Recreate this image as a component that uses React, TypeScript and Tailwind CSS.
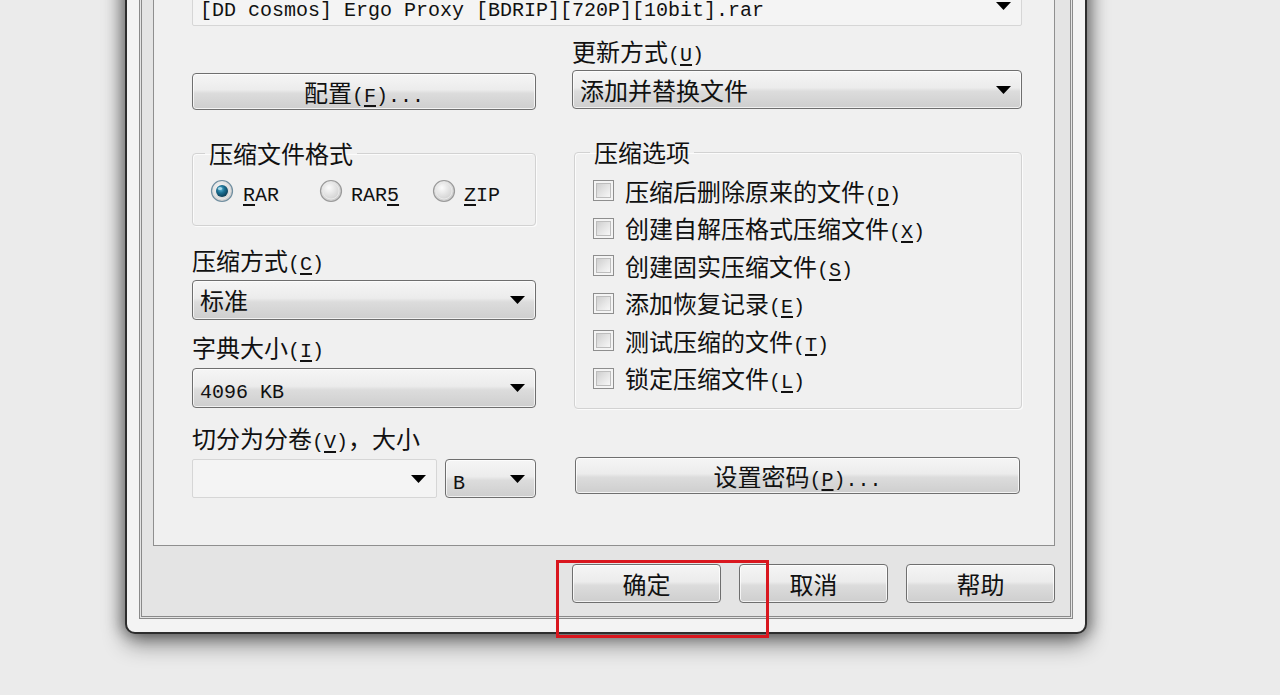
import React from 'react';

const grad =
  'bg-[linear-gradient(to_bottom,#f5f5f5_0%,#ececec_45%,#dcdcdc_55%,#cecece_100%)]';

const Mono: React.FC<{ children: React.ReactNode }> = ({ children }) => (
  <span className="font-['Liberation_Mono',monospace] text-[20px] leading-[16px]">{children}</span>
);

// (X) mnemonic with the underlined access key
const Key: React.FC<{ k: string }> = ({ k }) => (
  <Mono>
    (<span className="underline underline-offset-[3px]">{k}</span>)
  </Mono>
);

const Arrow: React.FC = () => (
  <svg width="15" height="8" viewBox="0 0 15 8" className="shrink-0">
    <polygon points="0,0 15,0 7.5,8" fill="#000" />
  </svg>
);

const Combo: React.FC<{ children?: React.ReactNode; className?: string }> = ({ children, className = '' }) => (
  <div
    className={`flex items-center justify-between rounded-[4px] border border-[#6e6e6e] pl-[7px] pr-[10px] shadow-[inset_0_0_0_1px_rgba(255,255,255,0.7)] ${grad} ${className}`}
  >
    <span className="leading-[26px]">{children}</span>
    <Arrow />
  </div>
);

const EditCombo: React.FC<{ children?: React.ReactNode; className?: string }> = ({ children, className = '' }) => (
  <div
    className={`flex items-center justify-between rounded-[2px] border border-[#d6d6d6] bg-[#f4f4f4] pl-[7px] pr-[10px] ${className}`}
  >
    <span className="leading-[26px]">{children}</span>
    <Arrow />
  </div>
);

const Button: React.FC<{ children: React.ReactNode; className?: string }> = ({ children, className = '' }) => (
  <div
    className={`flex items-center justify-center rounded-[4px] border border-[#6f6f6f] leading-[26px] shadow-[inset_0_0_0_1px_rgba(255,255,255,0.75)] ${grad} ${className}`}
  >
    <span className="leading-[26px]">{children}</span>
  </div>
);

const Radio: React.FC<{ checked?: boolean }> = ({ checked }) => (
  <svg width="24" height="24" viewBox="0 0 24 24" className="shrink-0">
    <defs>
      <radialGradient id="rOff" cx="40%" cy="35%" r="70%">
        <stop offset="0%" stopColor="#fbfbfb" />
        <stop offset="100%" stopColor="#c9c9c9" />
      </radialGradient>
      <radialGradient id="rOn" cx="40%" cy="35%" r="70%">
        <stop offset="0%" stopColor="#5fb7d6" />
        <stop offset="45%" stopColor="#1b6f92" />
        <stop offset="100%" stopColor="#0a3850" />
      </radialGradient>
    </defs>
    <circle cx="12" cy="12" r="10.5" fill="url(#rOff)" stroke={checked ? '#6f8ea0' : '#9a9a9a'} strokeWidth="1.2" />
    <circle cx="12" cy="12" r="8" fill="none" stroke="#e9e9e9" strokeWidth="1" />
    {checked && <circle cx="12" cy="12" r="6" fill="url(#rOn)" />}
    {checked && <ellipse cx="10" cy="9.5" rx="2.2" ry="1.5" fill="#bfe6f4" opacity="0.8" />}
  </svg>
);

const Check: React.FC = () => (
  <div className="h-[21px] w-[21px] shrink-0 border border-[#8e8e8e] bg-[#f4f4f4] p-[2px]">
    <div className="h-full w-full border border-[#bdbdbd] bg-[linear-gradient(135deg,#cfcfcf_0%,#e6e6e6_55%,#f7f7f7_100%)]" />
  </div>
);

const options: { text: string; k: string }[] = [
  { text: '压缩后删除原来的文件', k: 'D' },
  { text: '创建自解压格式压缩文件', k: 'X' },
  { text: '创建固实压缩文件', k: 'S' },
  { text: '添加恢复记录', k: 'E' },
  { text: '测试压缩的文件', k: 'T' },
  { text: '锁定压缩文件', k: 'L' },
];

const groupBox =
  'rounded-[4px] border border-[#d2d2d2] shadow-[inset_1px_1px_0_#fbfbfb,1px_1px_0_#fbfbfb]';

export default function App() {
  return (
    <div className="relative h-[695px] w-[1280px] overflow-hidden bg-[#ebebeb] font-['Noto_Sans_CJK_SC',sans-serif] text-[24px] leading-[26px] text-[#111]">
      {/* window */}
      <div className="ml-[125px] mt-[-65px] w-[962px] rounded-b-[10px] border-2 border-[#2d2d2d] bg-[#f3f3f3] p-[12px] pb-[13px] shadow-[0_10px_22px_rgba(0,0,0,0.45),-6px_0_14px_rgba(0,0,0,0.25),6px_0_14px_rgba(0,0,0,0.25)]">
        <div className="border-[3px] border-double border-[#8a8a8a] bg-[#e4e4e4] pb-[13px] pl-[11px] pr-[15px] pt-[12px]">
          {/* tab page */}
          <div className="border border-[#8f8f8f] bg-[#f0f0f0] pb-[47px] pl-[38px] pr-[31px] pt-[20px]">
            <EditCombo className="h-[41px] w-[830px]">
              <Mono>[DD cosmos] Ergo Proxy [BDRIP][720P][10bit].rar</Mono>
            </EditCombo>

            <div className="flex gap-[36px]">
              {/* left column */}
              <div className="flex w-[344px] flex-col">
                <Button className="mt-[47px] h-[37px]">
                  配置<Key k="F" />
                  <Mono>...</Mono>
                </Button>

                <fieldset className={`mt-[30px] h-[86px] px-[17px] ${groupBox}`}>
                  <legend className="ml-[-5px] px-[4px] leading-[26px]">压缩文件格式</legend>
                  <div className="mt-[12px] flex h-[26px] items-center">
                    <Radio checked />
                    <span className="ml-[9px] w-[76px]">
                      <Mono>
                        <span className="underline underline-offset-[3px]">R</span>AR
                      </Mono>
                    </span>
                    <Radio />
                    <span className="ml-[8px] w-[81px]">
                      <Mono>
                        RAR<span className="underline underline-offset-[3px]">5</span>
                      </Mono>
                    </span>
                    <Radio />
                    <span className="ml-[8px]">
                      <Mono>
                        <span className="underline underline-offset-[3px]">Z</span>IP
                      </Mono>
                    </span>
                  </div>
                </fieldset>

                <div className="mt-[21px] h-[26px] leading-[26px]">
                  压缩方式<Key k="C" />
                </div>
                <Combo className="mt-[7px] h-[40px]">标准</Combo>

                <div className="mt-[14px] h-[26px] leading-[26px]">
                  字典大小<Key k="I" />
                </div>
                <Combo className="mt-[8px] h-[40px]">
                  <Mono>4096 KB</Mono>
                </Combo>

                <div className="mt-[17px] h-[26px] leading-[26px]">
                  切分为分卷<Key k="V" />，大小
                </div>
                <div className="mt-[8px] flex h-[39px] gap-[8px]">
                  <EditCombo className="h-full w-[245px]" />
                  <Combo className="h-full flex-1">
                    <Mono>B</Mono>
                  </Combo>
                </div>
              </div>

              {/* right column */}
              <div className="flex w-[450px] flex-col">
                <div className="mt-[12px] h-[26px] leading-[26px]">
                  更新方式<Key k="U" />
                </div>
                <Combo className="mt-[6px] h-[39px]">添加并替换文件</Combo>

                <fieldset className={`mt-[30px] ml-[2px] pb-[11px] pl-[18px] ${groupBox}`}>
                  <legend className="ml-[-3px] px-[4px] leading-[26px]">压缩选项</legend>
                  <div className="mt-[7px] flex flex-col">
                    {options.map((o) => (
                      <div key={o.k} className="flex h-[37.5px] items-center">
                        <Check />
                        <span className="ml-[11px] h-[26px] leading-[26px]">
                          {o.text}
                          <Key k={o.k} />
                        </span>
                      </div>
                    ))}
                  </div>
                </fieldset>

                <Button className="ml-[3px] mr-[2px] mt-[48px] h-[37px]">
                  设置密码<Key k="P" />
                  <Mono>...</Mono>
                </Button>
              </div>
            </div>
          </div>

          {/* dialog buttons */}
          <div className="mt-[18px] flex justify-end gap-[18px]">
            <Button className="h-[39px] w-[149px]">确定</Button>
            <Button className="h-[39px] w-[149px]">取消</Button>
            <Button className="h-[39px] w-[149px]">帮助</Button>
          </div>
        </div>
      </div>

      {/* red highlight marker */}
      <div className="absolute left-[556px] top-[560px] h-[78px] w-[213px] border-[3px] border-[#d9161e]" />
    </div>
  );
}
